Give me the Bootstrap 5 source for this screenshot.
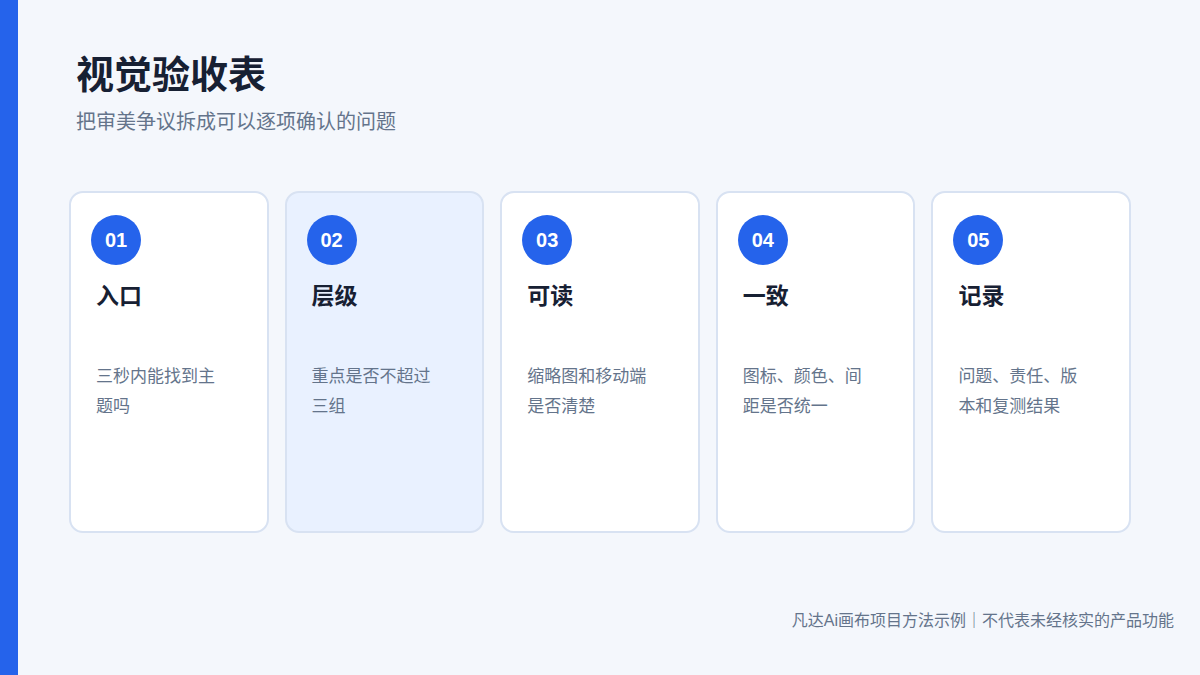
<!DOCTYPE html>
<html lang="zh-CN">
<head>
    <meta charset="UTF-8">
    <meta name="viewport" content="width=device-width, initial-scale=1.0">
    <title>视觉验收表</title>
    <link href="https://cdn.jsdelivr.net/npm/bootstrap@5.3.0/dist/css/bootstrap.min.css" rel="stylesheet">
    <script defer src="https://cdn.jsdelivr.net/npm/bootstrap@5.3.0/dist/js/bootstrap.bundle.min.js"></script>
    <style>
        html, body { height: 100%; }
        body {
            font-family: "Liberation Sans", "Noto Sans CJK SC", sans-serif;
            background: #f4f7fc;
            overflow: hidden;
        }
        .side-bar { width: 18px; background: #2563eb; }
        .slide { width: 1182px; height: 675px; }
        .head { padding: 51px 0 0 58px; height: 191px; }
        .head h1 { font-size: 38px; line-height: 48px; font-weight: 700; color: #172033; margin: 0; }
        .head p { font-size: 20px; line-height: 28px; color: #64748b; margin: 9px 0 0; }
        .cards { margin-left: 51px; width: 1062px; height: 342px; }
        .check-card {
            flex: 1 1 0;
            min-width: 0;
            background: #fff;
            border: 2px solid #d8e2f2;
            border-radius: 14px;
            padding: 22px 20px;
        }
        .check-card.active { background: #e9f1ff; }
        .num {
            width: 50px;
            height: 50px;
            background: #2563eb;
            color: #fff;
            font-size: 20px;
            font-weight: 700;
        }
        .check-card h2 {
            font-size: 23px;
            line-height: 32px;
            font-weight: 700;
            color: #172033;
            margin: 15px 0 0 5px;
        }
        .check-card p {
            font-size: 17px;
            line-height: 30px;
            color: #64748b;
            margin: 50px 0 0 5px;
            width: 130px;
        }
        .foot { font-size: 16px; line-height: 24px; color: #64748b; padding: 76px 26px 0 0; }
    </style>
</head>
<body class="d-flex m-0">
    <div class="side-bar flex-shrink-0"></div>
    <div class="slide">
        <div class="head">
            <h1>视觉验收表</h1>
            <p>把审美争议拆成可以逐项确认的问题</p>
        </div>
        <div class="cards d-flex gap-3">
            <div class="check-card">
                <div class="num rounded-circle d-flex align-items-center justify-content-center">01</div>
                <h2>入口</h2>
                <p>三秒内能找到主题吗</p>
            </div>
            <div class="check-card active">
                <div class="num rounded-circle d-flex align-items-center justify-content-center">02</div>
                <h2>层级</h2>
                <p>重点是否不超过三组</p>
            </div>
            <div class="check-card">
                <div class="num rounded-circle d-flex align-items-center justify-content-center">03</div>
                <h2>可读</h2>
                <p>缩略图和移动端是否清楚</p>
            </div>
            <div class="check-card">
                <div class="num rounded-circle d-flex align-items-center justify-content-center">04</div>
                <h2>一致</h2>
                <p>图标、颜色、间距是否统一</p>
            </div>
            <div class="check-card">
                <div class="num rounded-circle d-flex align-items-center justify-content-center">05</div>
                <h2>记录</h2>
                <p>问题、责任、版本和复测结果</p>
            </div>
        </div>
        <div class="foot text-end">凡达Ai画布项目方法示例｜不代表未经核实的产品功能</div>
    </div>
</body>
</html>
